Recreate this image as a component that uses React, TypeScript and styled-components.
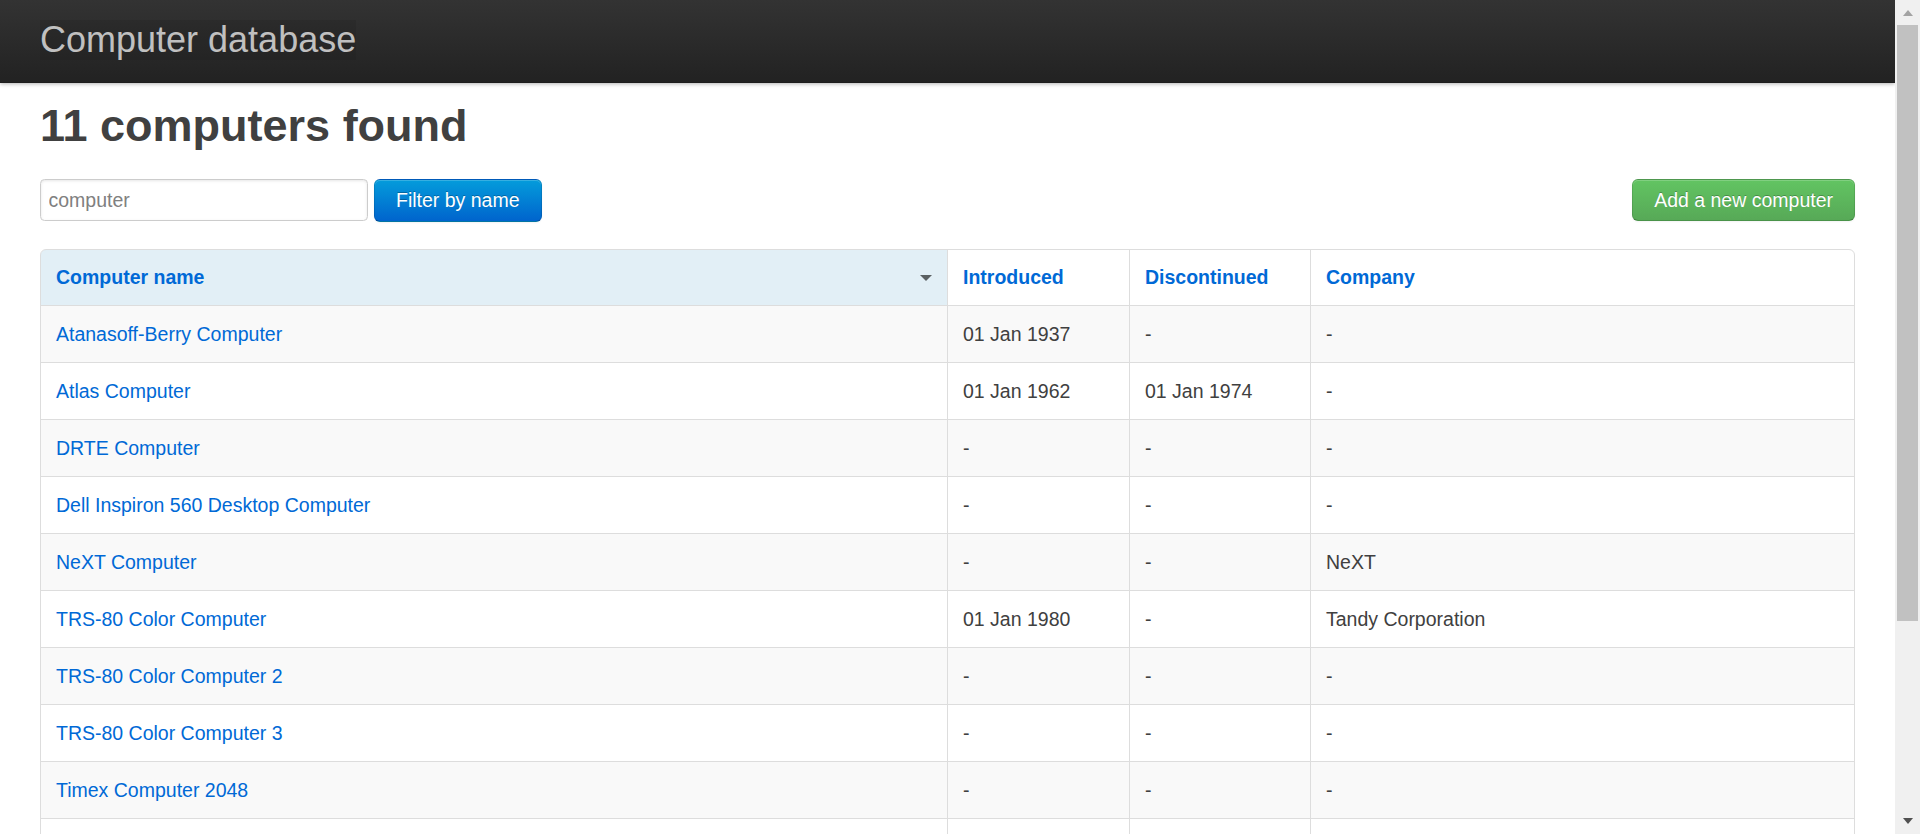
import React from "react";
import styled, { createGlobalStyle, css } from "styled-components";

const GlobalStyle = createGlobalStyle`
  html, body {
    margin: 0;
    padding: 0;
    height: 100%;
    overflow: hidden;
    background: #ffffff;
  }
  body {
    font-family: "Liberation Sans", Arial, sans-serif;
    font-size: 19.5px;
    line-height: 27px;
    color: #404040;
  }
  * { box-sizing: border-box; }
`;

const Viewport = styled.div`
  display: flex;
  height: 100vh;
  overflow: hidden;
`;

const Page = styled.div`
  flex: 1;
  min-width: 0;
  overflow: hidden;
`;

const TopBar = styled.header`
  height: 83px;
  padding: 20px 40px 0;
  background-color: #222;
  background-image: linear-gradient(to bottom, #333333, #222222);
  box-shadow: 0 1px 4px rgba(0, 0, 0, 0.3), inset 0 -1px 0 rgba(0, 0, 0, 0.1);
  position: relative;
  z-index: 1;
`;

const Brand = styled.a`
  display: inline-block;
  font-size: 36px;
  line-height: 40px;
  color: #c0c0c0;
  text-decoration: none;
  background: rgba(0, 0, 0, 0.07);
`;

const Main = styled.main`
  padding: 16px 40px 0;
`;

const Title = styled.h1`
  margin: 0 0 26px;
  font-size: 45px;
  line-height: 54px;
  font-weight: bold;
  color: #404040;
`;

const Actions = styled.div`
  display: flex;
  justify-content: space-between;
  align-items: flex-start;
  margin-bottom: 27px;
`;

const FilterForm = styled.form`
  display: flex;
  gap: 6px;
`;

const SearchInput = styled.input`
  width: 328px;
  height: 42px;
  padding: 0 7.5px;
  border: 1px solid #cccccc;
  border-radius: 4.5px;
  box-shadow: inset 0 1px 3px rgba(0, 0, 0, 0.1);
  font-family: "Liberation Sans", Arial, sans-serif;
  font-size: 19.5px;
  color: #808080;
  outline: none;
`;

const Button = styled.button<{ $variant: "primary" | "success" }>`
  height: 43px;
  padding: 0 21px;
  border: 1px solid;
  border-color: rgba(0, 0, 0, 0.1) rgba(0, 0, 0, 0.1) rgba(0, 0, 0, 0.25);
  border-radius: 6px;
  font-family: "Liberation Sans", Arial, sans-serif;
  font-size: 19.5px;
  color: #ffffff;
  text-shadow: 0 -1px 0 rgba(0, 0, 0, 0.25);
  box-shadow: inset 0 1px 0 rgba(255, 255, 255, 0.2), 0 1px 2px rgba(0, 0, 0, 0.05);
  cursor: pointer;
  ${(p) =>
    p.$variant === "primary"
      ? css`
          background-color: #0064cd;
          background-image: linear-gradient(to bottom, #049cdb, #0064cd);
        `
      : css`
          height: 42px;
          background-color: #57a957;
          background-image: linear-gradient(to bottom, #62c462, #57a957);
        `}
`;

const Table = styled.table`
  width: 100%;
  table-layout: fixed;
  border: 1px solid #dddddd;
  border-collapse: separate;
  border-spacing: 0;
  border-radius: 6px;
  font-size: 19.5px;
  margin-bottom: 27px;
`;

const HeadCell = styled.th<{ $sorted?: boolean }>`
  padding: 14px 15px;
  line-height: 27px;
  text-align: left;
  font-weight: bold;
  vertical-align: middle;
  & + & { border-left: 1px solid #dddddd; }
  &:first-child { border-top-left-radius: 5px; }
  &:last-child { border-top-right-radius: 5px; }
  ${(p) =>
    p.$sorted &&
    css`
      background-color: rgba(141, 192, 219, 0.25);
      &::after {
        content: "";
        float: right;
        margin-top: 10.5px;
        border-style: solid;
        border-width: 6px 6px 0;
        border-color: #000 transparent transparent;
        opacity: 0.6;
      }
    `}
`;

const HeadLink = styled.a`
  color: #0069d6;
  text-decoration: none;
`;

const Row = styled.tr<{ $odd: boolean }>`
  background-color: ${(p) => (p.$odd ? "#f9f9f9" : "#ffffff")};
`;

const Cell = styled.td`
  padding: 15px 15px 14px;
  line-height: 27px;
  vertical-align: top;
  border-top: 1px solid #dddddd;
  white-space: nowrap;
  overflow: hidden;
  & + & { border-left: 1px solid #dddddd; }
`;

const NameLink = styled.a`
  color: #0069d6;
  text-decoration: none;
`;

const Pagination = styled.ul`
  display: inline-flex;
  margin: 0;
  padding: 0;
  list-style: none;
  border: 1px solid #ddd;
  border-radius: 4.5px;
`;

const PageItem = styled.li<{ $disabled?: boolean }>`
  padding: 0 21px;
  line-height: 51px;
  color: ${(p) => (p.$disabled ? "#bfbfbf" : "#0069d6")};
  & + & { border-left: 1px solid #ddd; }
`;

const ScrollTrack = styled.div`
  width: 25px;
  flex: none;
  display: flex;
  flex-direction: column;
  background: #f0f0f0;
`;

const ScrollArrow = styled.div<{ $dir: "up" | "down" }>`
  height: 25px;
  flex: none;
  display: flex;
  align-items: center;
  justify-content: center;
  &::before {
    content: "";
    width: 0;
    height: 0;
    border-left: 5.5px solid transparent;
    border-right: 5.5px solid transparent;
    ${(p) =>
      p.$dir === "up"
        ? css`
            border-bottom: 6px solid #a3a3a3;
            margin-top: 1px;
          `
        : css`
            border-top: 6px solid #505050;
            margin-top: -1px;
          `}
  }
`;

const ScrollThumb = styled.div`
  height: 596px;
  margin: 0 2px;
  background: #c1c1c1;
  flex: none;
`;

const ScrollSpace = styled.div`
  flex: 1;
`;

type Computer = {
  name: string;
  introduced: string;
  discontinued: string;
  company: string;
};

const computers: Computer[] = [
  { name: "Atanasoff-Berry Computer", introduced: "01 Jan 1937", discontinued: "-", company: "-" },
  { name: "Atlas Computer", introduced: "01 Jan 1962", discontinued: "01 Jan 1974", company: "-" },
  { name: "DRTE Computer", introduced: "-", discontinued: "-", company: "-" },
  { name: "Dell Inspiron 560 Desktop Computer", introduced: "-", discontinued: "-", company: "-" },
  { name: "NeXT Computer", introduced: "-", discontinued: "-", company: "NeXT" },
  { name: "TRS-80 Color Computer", introduced: "01 Jan 1980", discontinued: "-", company: "Tandy Corporation" },
  { name: "TRS-80 Color Computer 2", introduced: "-", discontinued: "-", company: "-" },
  { name: "TRS-80 Color Computer 3", introduced: "-", discontinued: "-", company: "-" },
  { name: "Timex Computer 2048", introduced: "-", discontinued: "-", company: "-" },
  { name: "Timex Computer 2068", introduced: "-", discontinued: "-", company: "-" },
];

export default function App() {
  return (
    <>
      <GlobalStyle />
      <Viewport>
        <Page>
          <TopBar>
            <Brand href="#">Computer database</Brand>
          </TopBar>
          <Main>
            <Title>11 computers found</Title>
            <Actions>
              <FilterForm onSubmit={(e) => e.preventDefault()}>
                <SearchInput type="search" defaultValue="computer" placeholder="Filter by computer name..." />
                <Button type="submit" $variant="primary">Filter by name</Button>
              </FilterForm>
              <Button type="button" $variant="success">Add a new computer</Button>
            </Actions>
            <Table>
              <colgroup>
                <col />
                <col style={{ width: 182 }} />
                <col style={{ width: 181 }} />
                <col style={{ width: 544 }} />
              </colgroup>
              <thead>
                <tr>
                  <HeadCell $sorted><HeadLink href="#">Computer name</HeadLink></HeadCell>
                  <HeadCell><HeadLink href="#">Introduced</HeadLink></HeadCell>
                  <HeadCell><HeadLink href="#">Discontinued</HeadLink></HeadCell>
                  <HeadCell><HeadLink href="#">Company</HeadLink></HeadCell>
                </tr>
              </thead>
              <tbody>
                {computers.map((c, i) => (
                  <Row key={c.name} $odd={i % 2 === 0}>
                    <Cell><NameLink href="#">{c.name}</NameLink></Cell>
                    <Cell>{c.introduced}</Cell>
                    <Cell>{c.discontinued}</Cell>
                    <Cell>{c.company}</Cell>
                  </Row>
                ))}
              </tbody>
            </Table>
            <Pagination>
              <PageItem $disabled>← Previous</PageItem>
              <PageItem $disabled>Displaying 1 to 10 of 11</PageItem>
              <PageItem>Next →</PageItem>
            </Pagination>
          </Main>
        </Page>
        <ScrollTrack>
          <ScrollArrow $dir="up" />
          <ScrollThumb />
          <ScrollSpace />
          <ScrollArrow $dir="down" />
        </ScrollTrack>
      </Viewport>
    </>
  );
}
